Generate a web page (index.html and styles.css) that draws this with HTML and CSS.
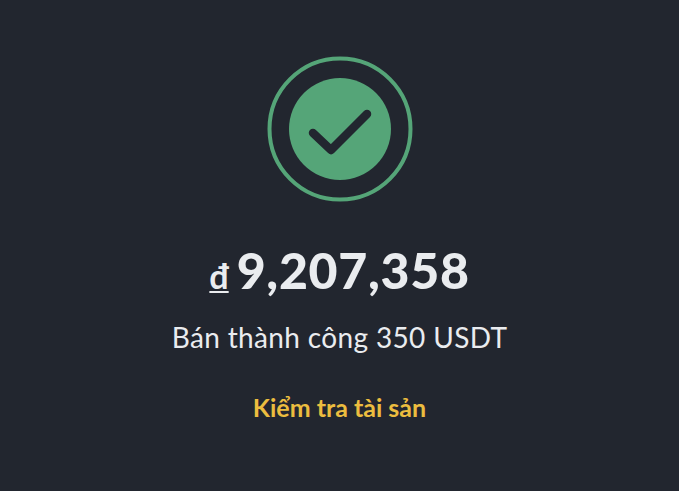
FILE: index.html
```html
<!DOCTYPE html>
<html lang="vi">
<head>
    <meta charset="UTF-8">
    <meta name="viewport" content="width=device-width, initial-scale=1.0">
    <title>Bán thành công</title>
    <link rel="stylesheet" href="styles.css">
</head>
<body>
    <div class="container">
        <svg class="check-icon" width="146" height="146" viewBox="0 0 146 146">
            <circle cx="73" cy="73" r="70.5" fill="none" stroke="#55a578" stroke-width="4"/>
            <circle cx="73" cy="73" r="51" fill="#55a578"/>
            <path d="M46 77 L64 94 L100 58" fill="none" stroke="#22262f" stroke-width="8.5" stroke-linecap="round" stroke-linejoin="round"/>
        </svg>
        <div class="amount">
            <span class="currency">đ</span>
            <span class="value">9,207,358</span>
        </div>
        <p class="message">Bán thành công 350 USDT</p>
        <a class="assets-link" href="#">Kiểm tra tài sản</a>
    </div>
</body>
</html>
```

FILE: styles.css
```css
* { margin: 0; padding: 0; box-sizing: border-box; }
body {
    font-family: 'Lato', sans-serif;
    background-color: #22262f;
    color: #eaecef;
    height: 100vh;
    overflow: hidden;
}
.container {
    display: flex;
    flex-direction: column;
    align-items: center;
    padding-top: 56px;
}
.amount {
    display: flex;
    align-items: baseline;
    gap: 8px;
    margin-top: 39px;
    height: 58px;
    line-height: 58px;
}
.currency {
    font-size: 34px;
    font-weight: 700;
    text-decoration: underline;
    text-decoration-thickness: 2px;
    text-underline-offset: 2px;
}
.value {
    font-size: 50px;
    font-weight: 900;
    letter-spacing: 0.7px;
}
.message {
    margin-top: 20px;
    font-size: 28px;
    line-height: 36px;
    font-weight: 400;
    letter-spacing: 0.35px;
}
.assets-link {
    margin-top: 36px;
    font-size: 25px;
    line-height: 32px;
    font-weight: 700;
    color: #ecbd3f;
    text-decoration: none;
}
```
